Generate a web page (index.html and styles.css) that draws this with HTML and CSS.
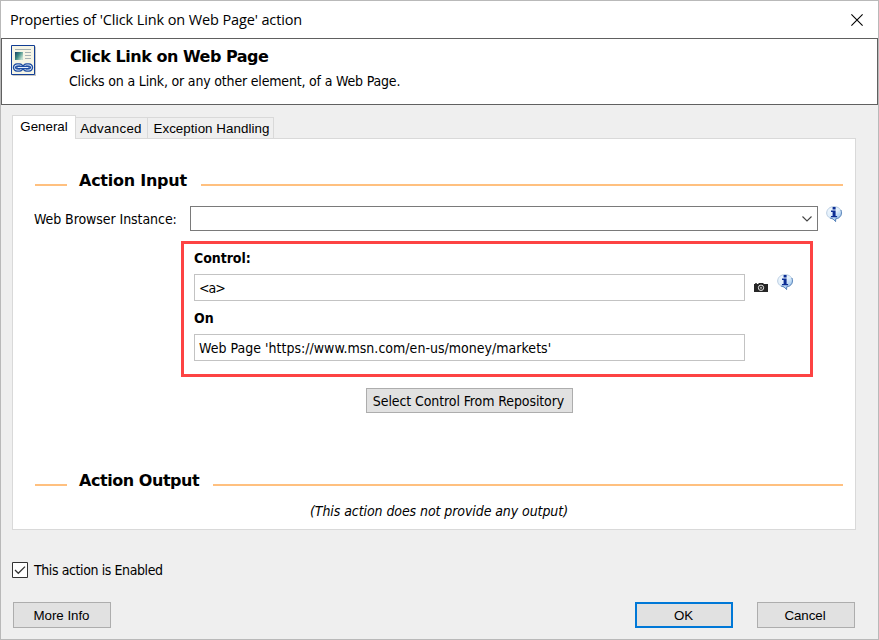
FILE: index.html
```
<!DOCTYPE html>
<html lang="en">
<head>
<meta charset="utf-8">
<title>Properties of 'Click Link on Web Page' action</title>
<link rel="stylesheet" href="styles.css">
</head>
<body>
<svg width="0" height="0" class="defs">
  <defs>
    <linearGradient id="balloon" x1="0" y1="0" x2="0.7" y2="1"><stop offset="0" stop-color="#f4f9fe"/><stop offset="0.5" stop-color="#e2f0fc"/><stop offset="1" stop-color="#8fbdec"/></linearGradient>
    <linearGradient id="thumb" x1="0" y1="0" x2="1" y2="0.6"><stop offset="0" stop-color="#173f68"/><stop offset="0.5" stop-color="#3f8b83"/><stop offset="1" stop-color="#c3e0d0"/></linearGradient>
    <symbol id="info" viewBox="0 0 17 17">
      <path d="M8 .6C3.700.6.700 3.400.7 7c0 3.200 2.600 5.400 6.300 5.900l2.600 2.700V12.900C13.300 12.400 15.600 10 15.600 7 15.600 3.400 12.300.6 8 .6z" fill="url(#balloon)" stroke="#b4c8de" stroke-width=".9"/>
      <path d="M14.900 4c1.600 4-.4 8.100-5.300 8.900v2.700L7 12.900 4 12" fill="none" stroke="#5b86bd" stroke-width="1"/>
      <path d="M6.600 1h3v2.400h-3zM5 4.600h4.600v5.300h1.500v1.300H5V9.900h1.600V5.900H5z" fill="#0b2d94"/>
    </symbol>
  </defs>
</svg>
<div class="window">
  <header class="titlebar">
    <span class="title">Properties of 'Click Link on Web Page' action</span>
    <svg class="close" width="12" height="12" viewBox="0 0 12 12"><path d="M.4.4l11.200 11.200M11.600.4L.4 11.600" stroke="#000" stroke-width="1.100"/></svg>
  </header>
  <section class="banner">
    <svg class="action-icon" width="27" height="33" viewBox="0 0 27 33">
      <path d="M1.500 1.500h23.500v29.500H1.500z" fill="#c8c8c8"/>
      <path d="M.5.5h23v29H.5z" fill="#f6f5e6" stroke="#123e94"/>
      <path d="M4 4.500h16M14 7.500h6M14 10.500h6M14 13.500h6" stroke="#a6b2b4"/>
      <path d="M4 7h8v8H4z" fill="url(#thumb)"/>
      <g fill="none" stroke="#1f4ea3" stroke-width="3.400"><rect x="3.500" y="20" width="7.500" height="5" rx="2.500"/><rect x="13" y="20" width="7.500" height="5" rx="2.500"/></g>
      <g fill="none" stroke="#e6eefb" stroke-width="1"><rect x="3.500" y="20" width="7.500" height="5" rx="2.500"/><rect x="13" y="20" width="7.500" height="5" rx="2.500"/></g>
      <path d="M7 22.500h10" stroke="#1f4ea3" stroke-width="3.400" stroke-linecap="round"/>
      <path d="M7 22.500h10" stroke="#e6eefb" stroke-width="1.200" stroke-linecap="round"/>
    </svg>
    <div class="banner-text">
      <h1>Click Link on Web Page</h1>
      <p>Clicks on a Link, or any other element, of a Web Page.</p>
    </div>
  </section>
  <nav class="tabs">
    <span class="tab active">General</span><span class="tab advanced">Advanced</span><span class="tab exception">Exception Handling</span>
  </nav>
  <main class="pane">
    <h2 class="section"><span class="heading input-heading">Action Input</span></h2>
    <div class="field-row">
      <label class="instance">Web Browser Instance:</label>
      <div class="combo"><svg width="10" height="6" viewBox="0 0 10 6"><path d="M.5.5L5 5 9.500.5" fill="none" stroke="#444" stroke-width="1.100"/></svg></div>
      <svg class="info" width="17" height="17"><use href="#info"/></svg>
    </div>
    <div class="control-box">
      <div class="label control-label">Control:</div>
      <div class="control-row">
        <div class="text-input tag">&lt;a&gt;</div>
        <svg class="camera" width="14" height="9" viewBox="0 0 14 9"><path d="M0 1h1V.3h2V1h1.500V0h5v1H14v8H0z" fill="#262626"/><circle cx="7" cy="4.800" r="2.700" fill="#333" stroke="#ddd" stroke-width="1"/><circle cx="7" cy="4.800" r=".9" fill="#ccc"/></svg>
        <svg class="info small" width="17" height="17"><use href="#info"/></svg>
      </div>
      <div class="label on-label">On</div>
      <div class="text-input url">Web Page 'https://www.msn.com/en-us/money/markets'</div>
    </div>
    <button class="repository"><span>Select Control From Repository</span></button>
    <h2 class="section output"><span class="heading output-heading">Action Output</span></h2>
    <p class="no-output"><span>(This action does not provide any output)</span></p>
  </main>
  <div class="enabled">
    <svg width="16" height="16" viewBox="0 0 16 16"><path d="M.5.5h15v15H.5z" fill="#fff" stroke="#333"/><path d="M3 8l3.300 3.300L13 4.600" fill="none" stroke="#333" stroke-width="1.300"/></svg>
    <span>This action is Enabled</span>
  </div>
  <footer class="actions">
    <button class="more"><span>More Info</span></button>
    <button class="ok"><span>OK</span></button>
    <button class="cancel"><span>Cancel</span></button>
  </footer>
</div>
</body>
</html>
```
FILE: styles.css
```
* { box-sizing: border-box; margin: 0; padding: 0; }
body { width: 879px; height: 640px; overflow: hidden; color: #000; font: 14px/18px "DejaVu Sans Condensed", "DejaVu Sans", sans-serif; white-space: nowrap; }
svg { display: block; flex: none; }
.defs { position: absolute; }
.window { display: flex; flex-direction: column; width: 879px; height: 640px; border: 1px solid #b9b9b9; background: #efefef; }
.titlebar { display: flex; align-items: center; justify-content: space-between; height: 37px; padding: 0 15px 0 9px; background: #fff; font: 14.5px/20px "Open Sans", sans-serif; }
.title { letter-spacing: -0.12px; }
.banner { display: flex; height: 67px; padding: 6px 0 0 9px; border: 1px solid #606060; background: #fff; }
.banner-text { margin: 1px 0 0 31px; }
h1, h2, .label { font-family: "DejaVu Sans", sans-serif; font-weight: bold; }
h1 { padding-left: 1px; font-size: 16px; line-height: 22px; letter-spacing: -0.48px; }
.banner p { margin-top: 4px; letter-spacing: -0.18px; }
.tabs { display: flex; align-items: flex-end; height: 33px; padding-left: 11px; font: 13.33px/21px "Liberation Sans", sans-serif; }
.tab { height: 21px; border: 1px solid #d9d9d9; border-width: 1px 1px 0 0; text-align: center; }
.active { position: relative; z-index: 1; width: 64px; height: 24px; margin-bottom: -1px; border-left-width: 1px; background: #fff; }
.advanced { width: 72px; padding-right: 1px; letter-spacing: 0.3px; }
.exception { width: 126px; padding-left: 2px; letter-spacing: 0.07px; }
.pane { width: 844px; height: 392px; margin-left: 11px; padding: 29px 12px 0 21px; border: 1px solid #d9d9d9; background: #fff; }
.section { display: flex; align-items: center; height: 24px; font-size: 16px; line-height: 24px; }
.section::before, .section::after { content: ""; height: 2px; margin-top: 10px; background: #ffc07f; }
.section::before { width: 32px; margin-left: 1px; }
.section::after { flex: 1; }
.heading { margin-left: 12px; padding-top: 1px; letter-spacing: -0.25px; }
.input-heading { width: 122px; }
.output-heading { width: 134px; letter-spacing: -0.45px; }
.field-row { display: flex; height: 25px; margin-top: 14px; }
.instance { width: 156px; line-height: 26px; letter-spacing: -0.07px; }
.combo { display: flex; align-items: center; justify-content: flex-end; width: 628px; height: 25px; padding-right: 5px; border: 1px solid #7a7a7a; }
.info { margin: 0 0 0 8px; }
.control-box { width: 632px; height: 136px; margin: 10px 0 0 147px; padding: 5px 10px 0; border: 3px solid #fd4343; }
.label { height: 18px; font-family: "DejaVu Sans Condensed", "DejaVu Sans", sans-serif; letter-spacing: -0.05px; }
.control-row { display: flex; margin-top: 7px; }
.text-input { width: 551px; height: 27px; padding-left: 4px; border: 1px solid #c3c3c3; line-height: 26px; letter-spacing: 0.02px; }
.tag { letter-spacing: -1px; }
.camera { margin: 9px 0 0 9px; }
.info.small { margin-left: 9px; }
.on-label { margin-top: 8px; }
.url { margin-top: 7px; }
button { display: flex; align-items: center; justify-content: center; color: #000; border: 1px solid #adadad; background: #e1e1e1; font: 13.33px/18px "Liberation Sans", sans-serif; }
.repository { width: 207px; height: 25px; margin: 11px 0 0 332px; padding-right: 2px; font: 14px/18px "DejaVu Sans Condensed", "DejaVu Sans", sans-serif; letter-spacing: -0.1px; }
.output { margin-top: 55px; }
.no-output { margin-top: 10px; padding-left: 276px; font-style: italic; letter-spacing: -0.08px; }
.enabled { display: flex; gap: 6px; margin: 32px 0 0 11px; height: 16px; line-height: 17px; letter-spacing: -0.4px; }
.actions { display: flex; margin: 24px 0 0 12px; }
.actions button { width: 98px; height: 26px; padding: 2px 1px 0 0; letter-spacing: -0.05px; }
.actions .cancel { padding-right: 2px; }
.actions .ok { margin: 0 24px 0 524px; border: 2px solid #0078d7; }
```
